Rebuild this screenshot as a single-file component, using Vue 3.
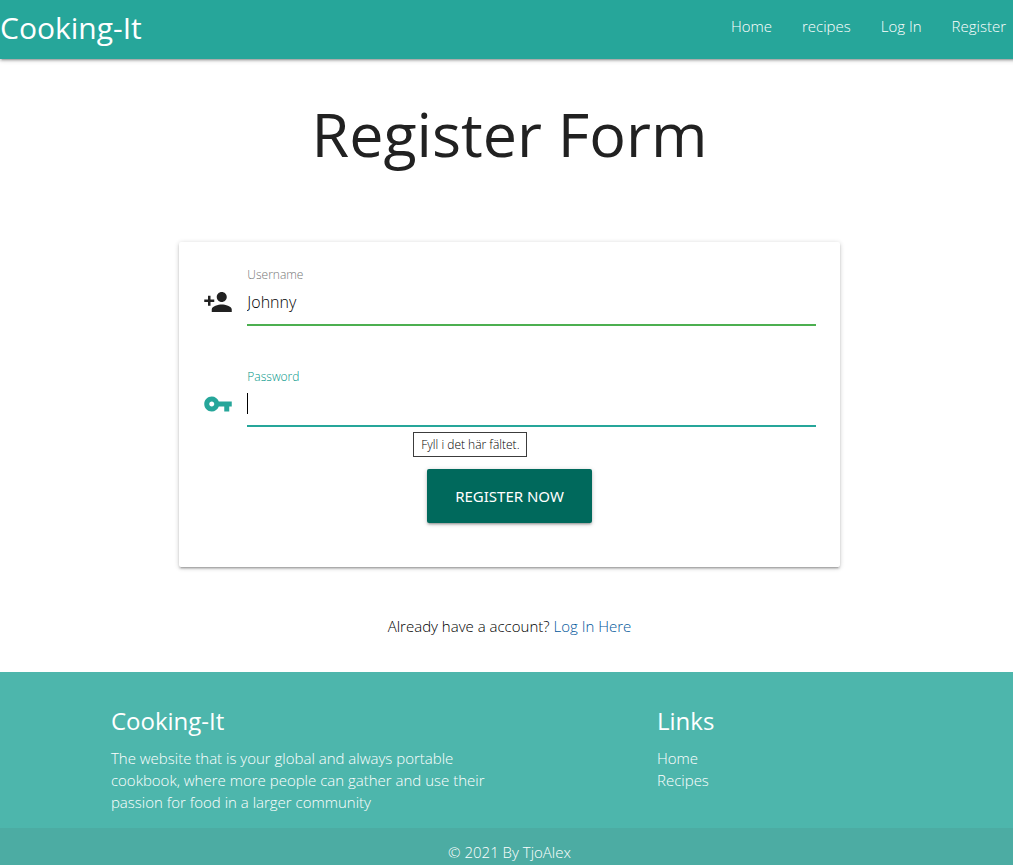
<script setup>
import { ref } from 'vue'

const username = ref('Johnny')
const password = ref('')
const navLinks = ['Home', 'recipes', 'Log In', 'Register']
const footerLinks = ['Home', 'Recipes']
</script>

<template>
  <div class="page">
    <header class="nav">
      <a href="#" class="brand">Cooking-It</a>
      <nav class="nav-links">
        <a v-for="link in navLinks" :key="link" href="#">{{ link }}</a>
      </nav>
    </header>

    <main class="main">
      <h1>Register Form</h1>
      <form class="card" @submit.prevent>
        <div class="field">
          <svg class="icon" viewBox="0 0 24 24" aria-hidden="true">
            <path d="M15 12c2.21 0 4-1.79 4-4s-1.79-4-4-4-4 1.79-4 4 1.79 4 4 4zm-9-2V7H4v3H1v2h3v3h2v-3h3v-2H6zm9 4c-2.67 0-8 1.34-8 4v2h16v-2c0-2.66-5.33-4-8-4z" />
          </svg>
          <div class="control">
            <label for="username">Username</label>
            <input id="username" v-model="username" type="text" class="valid" />
          </div>
        </div>
        <div class="field active">
          <svg class="icon" viewBox="0 0 24 24" aria-hidden="true">
            <path d="M12.65 10C11.83 7.67 9.61 6 7 6c-3.31 0-6 2.69-6 6s2.69 6 6 6c2.61 0 4.83-1.67 5.65-4H17v4h4v-4h2v-4H12.65zM7 14c-1.1 0-2-.9-2-2s.9-2 2-2 2 .9 2 2-.9 2-2 2z" />
          </svg>
          <div class="control">
            <label for="password">Password</label>
            <input id="password" v-model="password" type="password" />
            <span class="caret"></span>
            <span class="tip" role="tooltip">Fyll i det här fältet.</span>
          </div>
        </div>
        <button type="submit">REGISTER NOW</button>
      </form>
      <p class="login">Already have a account? <a href="#">Log In Here</a></p>
    </main>

    <footer class="footer">
      <div class="footer-content">
        <section>
          <h2>Cooking-It</h2>
          <p>The website that is your global and always portable cookbook, where more people can gather and use their passion for food in a larger community</p>
        </section>
        <section>
          <h2>Links</h2>
          <ul>
            <li v-for="link in footerLinks" :key="link"><a href="#">{{ link }}</a></li>
          </ul>
        </section>
      </div>
      <div class="copyright">© 2021 By TjoAlex</div>
    </footer>
  </div>
</template>

<style>
body {
  margin: 0;
  overflow-x: hidden;
}
</style>

<style scoped>
* {
  box-sizing: border-box;
}
.page {
  width: calc(100% + 6px);
  font-family: "Open Sans", "Noto Sans", sans-serif;
  font-size: 15px;
  font-weight: 300;
  line-height: 22px;
  color: #000;
  background: #fff;
}
a {
  text-decoration: none;
}
.nav {
  display: flex;
  justify-content: space-between;
  height: 59px;
  padding-right: 13px;
  background: #26a69a;
  box-shadow: 0 2px 2px 0 rgba(0, 0, 0, 0.14), 0 3px 1px -2px rgba(0, 0, 0, 0.12), 0 1px 5px 0 rgba(0, 0, 0, 0.2);
}
.nav a {
  color: #fff;
}
.brand {
  font-size: 30px;
  font-weight: 400;
  line-height: 56px;
}
.nav-links {
  display: flex;
  gap: 30px;
  line-height: 52px;
}
h1 {
  margin: 0 0 73px;
  padding-top: 40px;
  font-size: 61px;
  font-weight: 400;
  line-height: 70px;
  text-align: center;
  color: #212121;
}
h2 {
  margin: 0 0 12px;
  font-size: 24px;
  font-weight: 400;
  line-height: 28px;
  color: #fff;
}
.card {
  width: calc(65% - 2px);
  margin: 0 auto;
  padding: 22px 24px 44px;
  border-radius: 2px;
  background: #fff;
  box-shadow: 0 2px 2px 0 rgba(0, 0, 0, 0.14), 0 3px 1px -2px rgba(0, 0, 0, 0.12), 0 1px 5px 0 rgba(0, 0, 0, 0.2);
}
.field {
  display: flex;
  gap: 14px;
  margin-bottom: 40px;
}
.field.active {
  margin-bottom: 42px;
}
.icon {
  flex: none;
  width: 30px;
  height: 30px;
  margin-top: 23px;
  fill: #212121;
}
.active .icon {
  fill: #26a69a;
}
.control {
  position: relative;
  flex: 1;
}
label {
  display: block;
  font-size: 12px;
  line-height: 22px;
  color: #757575;
}
.active label {
  color: #009688;
}
input {
  display: block;
  width: 100%;
  height: 39px;
  margin-top: 1px;
  padding: 0 0 8px;
  border: 0;
  border-bottom: 2px solid #26a69a;
  outline: 0;
  background: transparent;
  font: 300 16px "Open Sans", "Noto Sans", sans-serif;
  color: #000;
}
.active input {
  margin-top: 0;
}
input.valid {
  border-bottom-color: #4caf50;
}
.caret {
  position: absolute;
  left: 0;
  top: 27px;
  width: 1px;
  height: 21px;
  background: #000;
}
.tip {
  position: absolute;
  left: 166px;
  top: 66px;
  padding: 0 7px;
  border: 1px solid #3c3c3c;
  background: #fff;
  font-size: 12px;
  line-height: 23px;
  color: #000;
  white-space: nowrap;
}
button {
  display: block;
  height: 54px;
  margin: 0 auto;
  padding: 0 28px;
  border: 0;
  border-radius: 2px;
  background: #00695c;
  box-shadow: 0 2px 2px 0 rgba(0, 0, 0, 0.14), 0 3px 1px -2px rgba(0, 0, 0, 0.12), 0 1px 5px 0 rgba(0, 0, 0, 0.2);
  font: 400 15px "Noto Sans", "Open Sans", sans-serif;
  color: #fff;
}
.login {
  margin: 0;
  padding: 48px 0 35px;
  text-align: center;
}
.login a {
  color: #01579b;
}
.footer {
  background: #4db6ac;
}
.footer-content {
  display: grid;
  grid-template-columns: 2fr 1fr;
  width: 80%;
  margin: 0 auto;
  padding: 35px 0 15px 9px;
  column-gap: 26px;
  color: #fff;
}
.footer-content p {
  margin: 0;
  max-width: 388px;
}
ul {
  margin: 0;
  padding: 0;
  list-style: none;
}
li a {
  color: #fff;
}
.copyright {
  height: 37px;
  padding-top: 13px;
  background: #4caca3;
  color: #fff;
  text-align: center;
}
</style>
